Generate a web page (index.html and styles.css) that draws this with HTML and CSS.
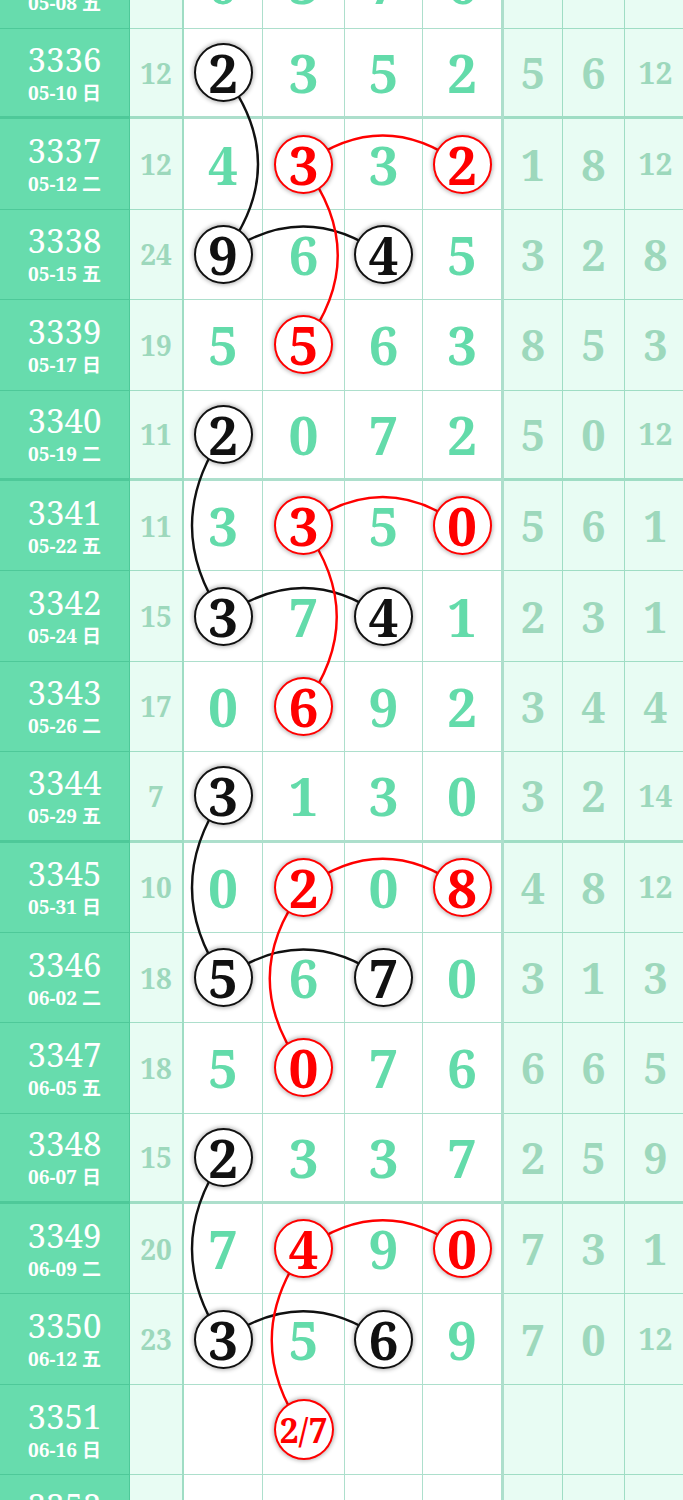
FILE: index.html
```html
<!DOCTYPE html>
<html lang="zh">
<head>
  <meta charset="UTF-8" />
  <title>走势图</title>
  <link rel="stylesheet" href="styles.css">
</head>
<body>
  <div class="chart">
    <div class="row">
      <div class="issue"><b>3335</b><span>05-08 五</span></div>
      <div class="sum">16</div>
      <div class="num">0</div><div class="num">3</div><div class="num">7</div><div class="num">6</div>
      <div class="dist">4</div><div class="dist">1</div><div class="dist">3</div>
    </div>
    <div class="row end">
      <div class="issue"><b>3336</b><span>05-10 日</span></div>
      <div class="sum">12</div>
      <div class="num"><i class="ball">2</i></div><div class="num">3</div><div class="num">5</div><div class="num">2</div>
      <div class="dist">5</div><div class="dist">6</div><div class="dist two">12</div>
    </div>
    <div class="row">
      <div class="issue"><b>3337</b><span>05-12 二</span></div>
      <div class="sum">12</div>
      <div class="num">4</div><div class="num"><i class="ball red">3</i></div><div class="num">3</div><div class="num"><i class="ball red">2</i></div>
      <div class="dist">1</div><div class="dist">8</div><div class="dist two">12</div>
    </div>
    <div class="row">
      <div class="issue"><b>3338</b><span>05-15 五</span></div>
      <div class="sum">24</div>
      <div class="num"><i class="ball">9</i></div><div class="num">6</div><div class="num"><i class="ball">4</i></div><div class="num">5</div>
      <div class="dist">3</div><div class="dist">2</div><div class="dist">8</div>
    </div>
    <div class="row">
      <div class="issue"><b>3339</b><span>05-17 日</span></div>
      <div class="sum">19</div>
      <div class="num">5</div><div class="num"><i class="ball red">5</i></div><div class="num">6</div><div class="num">3</div>
      <div class="dist">8</div><div class="dist">5</div><div class="dist">3</div>
    </div>
    <div class="row end">
      <div class="issue"><b>3340</b><span>05-19 二</span></div>
      <div class="sum">11</div>
      <div class="num"><i class="ball">2</i></div><div class="num">0</div><div class="num">7</div><div class="num">2</div>
      <div class="dist">5</div><div class="dist">0</div><div class="dist two">12</div>
    </div>
    <div class="row">
      <div class="issue"><b>3341</b><span>05-22 五</span></div>
      <div class="sum">11</div>
      <div class="num">3</div><div class="num"><i class="ball red">3</i></div><div class="num">5</div><div class="num"><i class="ball red">0</i></div>
      <div class="dist">5</div><div class="dist">6</div><div class="dist">1</div>
    </div>
    <div class="row">
      <div class="issue"><b>3342</b><span>05-24 日</span></div>
      <div class="sum">15</div>
      <div class="num"><i class="ball">3</i></div><div class="num">7</div><div class="num"><i class="ball">4</i></div><div class="num">1</div>
      <div class="dist">2</div><div class="dist">3</div><div class="dist">1</div>
    </div>
    <div class="row">
      <div class="issue"><b>3343</b><span>05-26 二</span></div>
      <div class="sum">17</div>
      <div class="num">0</div><div class="num"><i class="ball red">6</i></div><div class="num">9</div><div class="num">2</div>
      <div class="dist">3</div><div class="dist">4</div><div class="dist">4</div>
    </div>
    <div class="row end">
      <div class="issue"><b>3344</b><span>05-29 五</span></div>
      <div class="sum">7</div>
      <div class="num"><i class="ball">3</i></div><div class="num">1</div><div class="num">3</div><div class="num">0</div>
      <div class="dist">3</div><div class="dist">2</div><div class="dist two">14</div>
    </div>
    <div class="row">
      <div class="issue"><b>3345</b><span>05-31 日</span></div>
      <div class="sum">10</div>
      <div class="num">0</div><div class="num"><i class="ball red">2</i></div><div class="num">0</div><div class="num"><i class="ball red">8</i></div>
      <div class="dist">4</div><div class="dist">8</div><div class="dist two">12</div>
    </div>
    <div class="row">
      <div class="issue"><b>3346</b><span>06-02 二</span></div>
      <div class="sum">18</div>
      <div class="num"><i class="ball">5</i></div><div class="num">6</div><div class="num"><i class="ball">7</i></div><div class="num">0</div>
      <div class="dist">3</div><div class="dist">1</div><div class="dist">3</div>
    </div>
    <div class="row">
      <div class="issue"><b>3347</b><span>06-05 五</span></div>
      <div class="sum">18</div>
      <div class="num">5</div><div class="num"><i class="ball red">0</i></div><div class="num">7</div><div class="num">6</div>
      <div class="dist">6</div><div class="dist">6</div><div class="dist">5</div>
    </div>
    <div class="row end">
      <div class="issue"><b>3348</b><span>06-07 日</span></div>
      <div class="sum">15</div>
      <div class="num"><i class="ball">2</i></div><div class="num">3</div><div class="num">3</div><div class="num">7</div>
      <div class="dist">2</div><div class="dist">5</div><div class="dist">9</div>
    </div>
    <div class="row">
      <div class="issue"><b>3349</b><span>06-09 二</span></div>
      <div class="sum">20</div>
      <div class="num">7</div><div class="num"><i class="ball red">4</i></div><div class="num">9</div><div class="num"><i class="ball red">0</i></div>
      <div class="dist">7</div><div class="dist">3</div><div class="dist">1</div>
    </div>
    <div class="row">
      <div class="issue"><b>3350</b><span>06-12 五</span></div>
      <div class="sum">23</div>
      <div class="num"><i class="ball">3</i></div><div class="num">5</div><div class="num"><i class="ball">6</i></div><div class="num">9</div>
      <div class="dist">7</div><div class="dist">0</div><div class="dist two">12</div>
    </div>
    <div class="row">
      <div class="issue"><b>3351</b><span>06-16 日</span></div>
      <div class="sum"></div>
      <div class="num"></div><div class="num"><i class="ball red guess">2/7</i></div><div class="num"></div><div class="num"></div>
      <div class="dist"></div><div class="dist"></div><div class="dist"></div>
    </div>
    <div class="row end">
      <div class="issue"><b>3352</b><span>06-19 二</span></div>
      <div class="sum"></div>
      <div class="num"></div><div class="num"></div><div class="num"></div><div class="num"></div>
      <div class="dist"></div><div class="dist"></div><div class="dist"></div>
    </div>

    <!-- 连线 -->
    <svg class="links" width="687" height="1628" viewBox="0 0 687 1628">
      <g class="black">
        <path d="M223,134.1 Q293,225.25 223,316.4" />
        <path d="M223,316.4 Q303.25,258.4 383.5,316.4" />
        <path d="M223,495.7 Q161,586.85 223,678" />
        <path d="M223,678 Q303.25,620 383.5,678" />
        <path d="M223,857.3 Q161,948.45 223,1039.6" />
        <path d="M223,1039.6 Q303.25,981.6 383.5,1039.6" />
        <path d="M223,1218.9 Q161,1310.05 223,1401.2" />
        <path d="M223,1401.2 Q303.25,1343.2 383.5,1401.2" />
      </g>
      <g class="red">
        <path d="M303.5,226 Q382.75,167 462,226" />
        <path d="M303.5,226 Q372,316.4 303.5,406.8" />
        <path d="M303.5,587.6 Q382.75,528.6 462,587.6" />
        <path d="M303.5,587.6 Q370,678 303.5,768.4" />
        <path d="M303.5,949.2 Q382.75,890.2 462,949.2" />
        <path d="M303.5,949.2 Q236,1039.6 303.5,1130" />
        <path d="M303.5,1310.8 Q382.75,1251.8 462,1310.8" />
        <path d="M303.5,1310.8 Q240,1401.2 303.5,1491.6" />
      </g>
    </svg>
  </div>
</body>
</html>
```

FILE: styles.css
```css
html, body {
  margin: 0;
  padding: 0;
  background: #fff;
  overflow: hidden;
}

body {
  font-family: "Noto Serif", "DejaVu Serif Condensed", "DejaVu Serif", "Noto Sans CJK SC", serif;
  color: #333;
}

.chart {
  position: relative;
  width: 687px;
  margin-top: -61.4px;
}

.row {
  display: grid;
  grid-template-columns: 130px 54px 79px 82px 78px 81px 59px 62px 62px;
  height: 90.4px;
}

.row > div {
  box-sizing: border-box;
  border-right: 1px solid rgba(40, 170, 120, 0.38);
  border-bottom: 1px solid rgba(40, 170, 120, 0.38);
  display: flex;
  align-items: center;
  justify-content: center;
  line-height: 1;
}

.row.end > div {
  border-bottom-width: 3px;
}

.row > :nth-child(2) {
  border-right-width: 2px;
}

.row > :nth-child(6) {
  border-right-width: 3px;
}

/* 期号 */
.issue {
  flex-direction: column;
  gap: 8px;
  background: #67dcad;
  color: #fff;
}

.issue b {
  font-weight: normal;
  font-size: 33px;
}

.issue span {
  font-size: 19px;
  font-weight: bold;
}

.sum,
.dist {
  background: #e8fcf3;
  color: #9dd8bc;
  font-weight: bold;
}

.sum {
  font-size: 28px;
}

.dist {
  font-size: 43px;
}

.dist.two {
  font-size: 30px;
}

.num {
  color: #63dbaa;
  font-weight: bold;
  font-size: 53px;
}

.ball {
  position: relative;
  z-index: 2;
  box-sizing: border-box;
  width: 59px;
  height: 59px;
  display: flex;
  align-items: center;
  justify-content: center;
  border: 2.5px solid #111;
  border-radius: 50%;
  background: #fff;
  color: #111;
  font-style: normal;
  box-shadow: 0 0 4px 1px rgba(0, 0, 0, 0.3);
}

.ball.red {
  border-color: #f00;
  color: #f00;
}

.ball.guess {
  width: 60px;
  height: 61px;
  font-size: 34px;
}

.links {
  position: absolute;
  top: 0;
  left: 0;
  z-index: 1;
  fill: none;
  stroke-width: 2.4;
}

.links .black { stroke: #111; }
.links .red { stroke: #f00; }
```
